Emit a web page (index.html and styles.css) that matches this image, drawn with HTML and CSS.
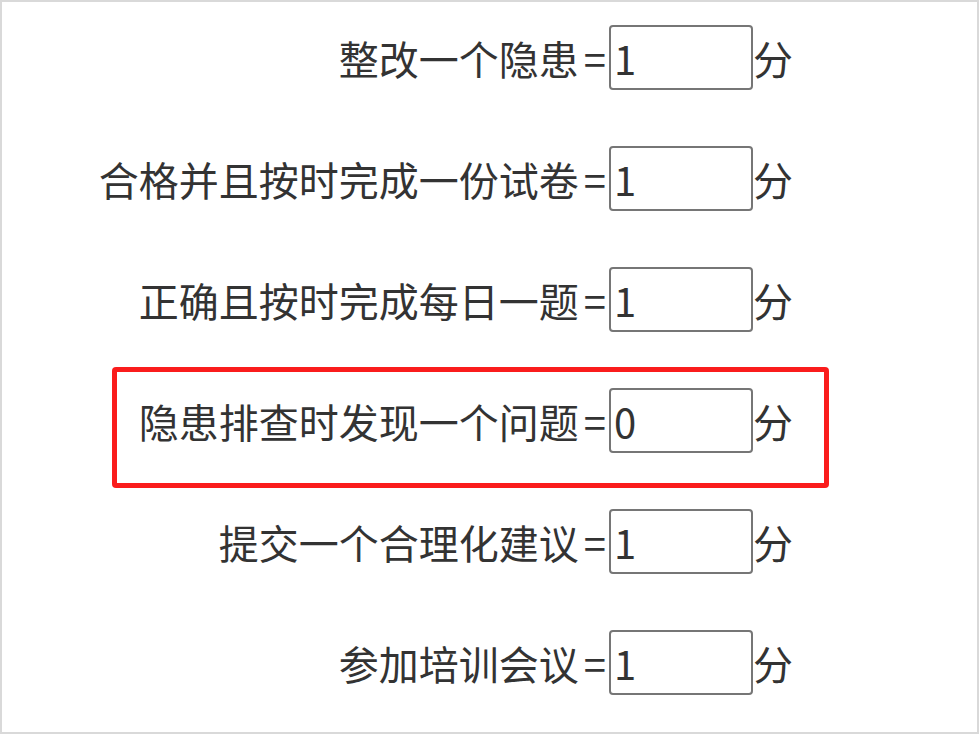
FILE: index.html
```html
<!DOCTYPE html>
<html lang="zh-CN">
<head>
	<meta charset="UTF-8">
	<title>积分设置</title>
	<link rel="stylesheet" href="styles.css">
</head>
<body>
	<div class="panel">
		<div class="row">
			<label class="name">整改一个隐患<span class="eq">=</span></label>
			<input class="score" type="text" value="1">
			<span class="unit">分</span>
		</div>
		<div class="row">
			<label class="name">合格并且按时完成一份试卷<span class="eq">=</span></label>
			<input class="score" type="text" value="1">
			<span class="unit">分</span>
		</div>
		<div class="row">
			<label class="name">正确且按时完成每日一题<span class="eq">=</span></label>
			<input class="score" type="text" value="1">
			<span class="unit">分</span>
		</div>
		<div class="row marked">
			<label class="name">隐患排查时发现一个问题<span class="eq">=</span></label>
			<input class="score" type="text" value="0">
			<span class="unit">分</span>
		</div>
		<div class="row">
			<label class="name">提交一个合理化建议<span class="eq">=</span></label>
			<input class="score" type="text" value="1">
			<span class="unit">分</span>
		</div>
		<div class="row">
			<label class="name">参加培训会议<span class="eq">=</span></label>
			<input class="score" type="text" value="1">
			<span class="unit">分</span>
		</div>
	</div>
</body>
</html>
```

FILE: styles.css
```css
*{
	margin: 0;
	padding: 0;
	box-sizing: border-box;
}
body{
	font-family: "Noto Sans CJK SC", "Liberation Sans", sans-serif;
	color: #333;
	background: #fff;
}
.panel{
	width: 979px;
	height: 734px;
	border: 2px solid #d9d9d9;
	padding: 2px 0 0 110px;
	overflow: hidden;
}
.row{
	display: flex;
	align-items: baseline;
	width: 717px;
	height: 121px;
	padding-top: 21px;
	font-size: 40px;
	border-radius: 4px;
}
.row.marked{
	box-shadow: inset 0 0 0 5px #fa1c1c;
}
.row .name{
	display: flex;
	align-items: baseline;
	justify-content: flex-end;
	width: 494px;
	margin-right: 3px;
	white-space: nowrap;
}
.row .name .eq{
	padding-left: 5px;
}
.row .score{
	width: 144px;
	height: 65px;
	border: 2px solid #767676;
	border-radius: 4px;
	padding: 0 3px;
	font: inherit;
	color: #333;
	background: #fff;
	outline: none;
}
```
